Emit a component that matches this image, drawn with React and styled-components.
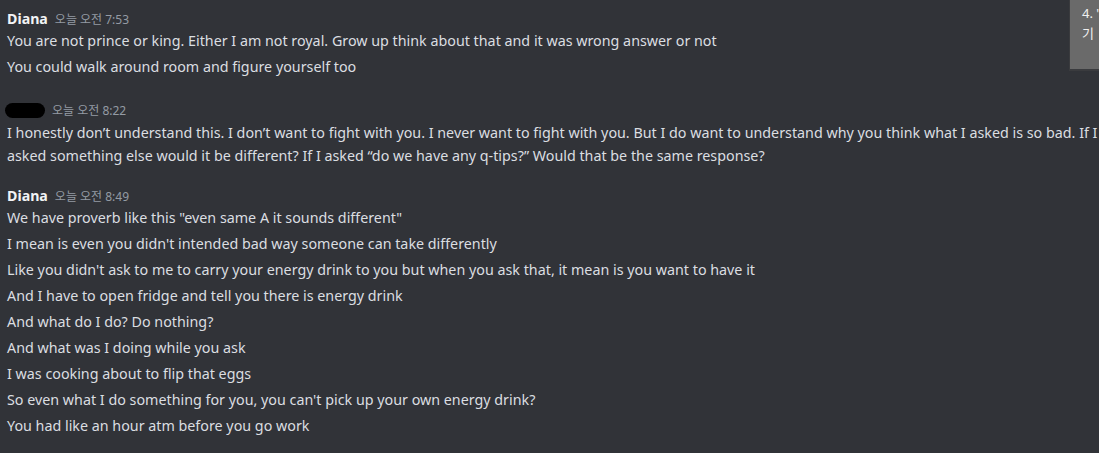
import React from "react";
import styled, { createGlobalStyle } from "styled-components";

const Global = createGlobalStyle`
  html, body { margin: 0; padding: 0; background: #313338; }
  body { width: 1099px; height: 453px; overflow: hidden; }
  #root { height: 453px; }
`;

const Page = styled.div`
  position: relative;
  height: 453px;
  box-sizing: border-box;
  padding: 8px 0 0 7px;
  background: #313338;
  font-family: "Noto Sans", "Noto Sans CJK KR", sans-serif;
  color: #dbdee1;
`;

const Group = styled.section`
  display: flex;
  flex-direction: column;
  margin-top: ${(p) => p.$top || 0}px;
`;

const Header = styled.div`
  display: flex;
  align-items: baseline;
  gap: 7px;
  height: 21px;
  line-height: 21px;
`;

const Name = styled.span`
  font-size: 14.2px;
  font-weight: 700;
  color: #f2f3f5;
`;

const Redacted = styled.span`
  display: inline-block;
  width: 40px;
  height: 15px;
  border-radius: 8px;
  background: #000;
  margin-left: -2px;
  align-self: center;
`;

const Time = styled.span`
  font-size: 12px;
  color: #949ba4;
`;

const Message = styled.div`
  font-size: 14.3px;
  line-height: 23px;
  padding-bottom: 3px;
  color: #dbdee1;
`;

const Popup = styled.div`
  position: absolute;
  top: 0;
  left: 1069px;
  width: 40px;
  height: 71px;
  background: #6a6a6a;
  border-left: 1px solid #3a3b3e;
  border-bottom: 2px solid #3a3b3e;
  box-sizing: border-box;
  padding: 3px 0 0 12px;
  font-size: 13px;
  line-height: 20px;
  color: #f0f0f0;
  white-space: nowrap;
  overflow: hidden;
`;

const groups = [
  {
    name: "Diana",
    time: "오늘 오전 7:53",
    top: 0,
    lines: [
      "You are not prince or king. Either I am not royal. Grow up think about that and it was wrong answer or not",
      "You could walk around room and figure yourself too",
    ],
  },
  {
    name: null,
    time: "오늘 오전 8:22",
    top: 19,
    lines: [
      "I honestly don\u2019t understand this. I don\u2019t want to fight with you. I never want to fight with you. But I do want to understand why you think what I asked is so bad. If I asked something else would it be different? If I asked \u201cdo we have any q-tips?\u201d Would that be the same response?",
    ],
  },
  {
    name: "Diana",
    time: "오늘 오전 8:49",
    top: 15,
    lines: [
      'We have proverb like this "even same A it sounds different"',
      "I mean is even you didn't intended bad way someone can take differently",
      "Like you didn't ask to me to carry your energy drink to you but when you ask that, it mean is you want to have it",
      "And I have to open fridge and tell you there is energy drink",
      "And what do I do? Do nothing?",
      "And what was I doing while you ask",
      "I was cooking about to flip that eggs",
      "So even what I do something for you, you can't pick up your own energy drink?",
      "You had like an hour atm before you go work",
    ],
  },
];

export default function App() {
  return (
    <>
      <Global />
      <Page>
        {groups.map((g, i) => (
          <Group key={i} $top={g.top}>
            <Header>
              {g.name ? <Name>{g.name}</Name> : <Redacted />}
              <Time>{g.time}</Time>
            </Header>
            {g.lines.map((l, j) => (
              <Message key={j}>{l}</Message>
            ))}
          </Group>
        ))}
        <Popup>
          <div>4. '</div>
          <div>기</div>
        </Popup>
      </Page>
    </>
  );
}
